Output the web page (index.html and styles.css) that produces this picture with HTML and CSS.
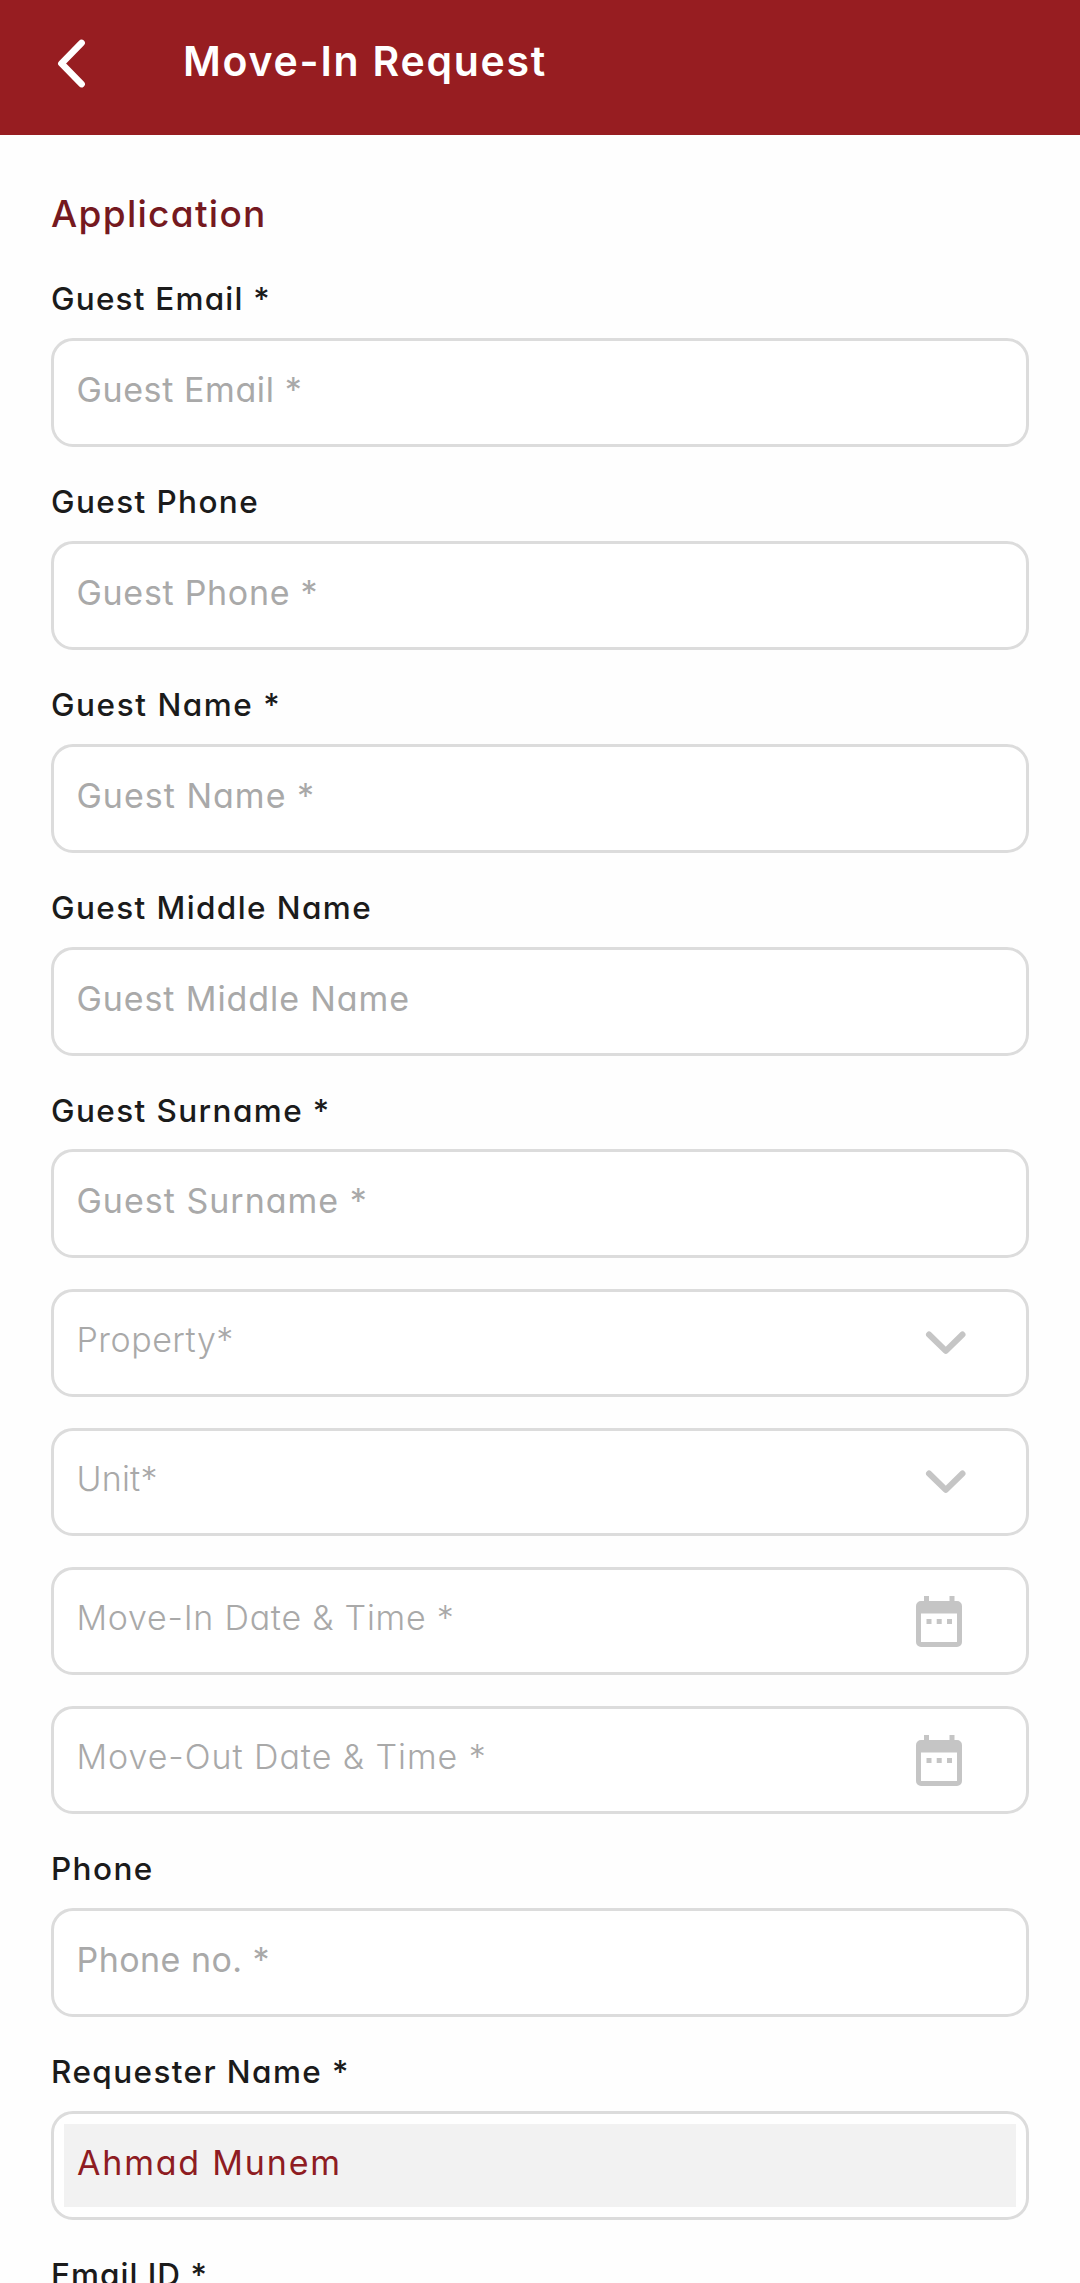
FILE: index.html
```html
<!DOCTYPE html>
<html lang="en">
<head>
<meta charset="utf-8">
<title>Move-In Request</title>
<link rel="stylesheet" href="styles.css">
</head>
<body>
<header class="topbar">
  <svg class="back" viewBox="0 0 36 56" width="36" height="56"><path d="M28.500 9 8.500 29.500 28.500 50"/></svg>
  <h1 class="title">Move-In Request</h1>
</header>
<main class="form">
  <h2 class="section">Application</h2>

  <div class="label snug">Guest Email *</div>
  <div class="box snug">Guest Email *</div>

  <div class="label">Guest Phone</div>
  <div class="box phone">Guest Phone *</div>

  <div class="label wide">Guest Name *</div>
  <div class="box wide">Guest Name *</div>

  <div class="label">Guest Middle Name</div>
  <div class="box">Guest Middle Name</div>

  <div class="label">Guest Surname *</div>
  <div class="box wide">Guest Surname *</div>

  <div class="pickers">
    <div class="box light tight">
      <span>Property*</span>
      <svg class="chevron" viewBox="0 0 46 30" width="46" height="30"><path d="M6 6.500 22.800 22.800 39.500 6.500"/></svg>
    </div>
    <div class="box light narrow">
      <span>Unit*</span>
      <svg class="chevron" viewBox="0 0 46 30" width="46" height="30"><path d="M6 6.500 22.800 22.800 39.500 6.500"/></svg>
    </div>
    <div class="box light">
      <span>Move-In Date &amp; Time *</span>
      <svg class="calendar" viewBox="0 0 46 51" width="46" height="51"><path fill-rule="evenodd" d="M8 0h5v5h20.500V0h5v5H41a5 5 0 0 1 5 5v36a5 5 0 0 1-5 5H5a5 5 0 0 1-5-5V10a5 5 0 0 1 5-5h3zM5 17.500V46h36V17.500zM10.500 23h5v5h-5zM20.700 23h5v5h-5zM31 23h5v5h-5z"/></svg>
    </div>
    <div class="box light out">
      <span>Move-Out Date &amp; Time *</span>
      <svg class="calendar" viewBox="0 0 46 51" width="46" height="51"><path fill-rule="evenodd" d="M8 0h5v5h20.500V0h5v5H41a5 5 0 0 1 5 5v36a5 5 0 0 1-5 5H5a5 5 0 0 1-5-5V10a5 5 0 0 1 5-5h3zM5 17.500V46h36V17.500zM10.500 23h5v5h-5zM20.700 23h5v5h-5zM31 23h5v5h-5z"/></svg>
    </div>
  </div>

  <div class="label">Phone</div>
  <div class="box tight">Phone no. *</div>

  <div class="label">Requester Name *</div>
  <div class="box readonly"><div class="value">Ahmad Munem</div></div>

  <div class="label id">Email ID *</div>
</main>
</body>
</html>
```
FILE: styles.css
```css
* {
  box-sizing: border-box;
}

body {
  margin: 0;
  height: 2283px;
  overflow: hidden;
  background: #fefefe;
  font-family: Inter, "Open Sans", sans-serif;
  font-feature-settings: "cv11";
}

/* Header */
.topbar {
  display: flex;
  align-items: flex-start;
  height: 135px;
  padding-left: 53px;
  background: #971d21;
  color: #fff;
}

.back {
  margin-top: 34px;
  fill: none;
  stroke: #fff;
  stroke-width: 6.8;
  stroke-linecap: round;
  stroke-linejoin: round;
}

.title {
  margin: 31px 0 0 94px;
  font-size: 41px;
  font-weight: 600;
  line-height: 60px;
  letter-spacing: 1.75px;
}

/* Form */
.form {
  padding: 0 51px;
}

.section {
  margin: 0;
  height: 109.5px;
  padding-top: 57px;
  color: #75191f;
  font-size: 37px;
  font-weight: 500;
  line-height: 44px;
  letter-spacing: 1.3px;
}

.label {
  height: 93.75px;
  padding-top: 31px;
  color: #1b1b1b;
  font-size: 31.5px;
  font-weight: 500;
  line-height: 47px;
  letter-spacing: 1.4px;
}

.label.snug {
  padding-top: 30px;
  letter-spacing: 1.2px;
}

.label.wide {
  letter-spacing: 1.55px;
}

.label.id {
  letter-spacing: 1px;
}

.box {
  height: 109px;
  padding-left: 22.5px;
  border: 3px solid #dcdcdc;
  border-radius: 22px;
  background: #fff;
  color: #a9a9a9;
  font-size: 34px;
  font-weight: 400;
  line-height: 97px;
  letter-spacing: .9px;
}

.box.snug {
  letter-spacing: .6px;
}

.box.phone {
  letter-spacing: .7px;
}

.box.wide {
  letter-spacing: 1px;
}

.box.tight {
  letter-spacing: .45px;
}

/* Dropdown and date fields */
.pickers {
  display: grid;
  gap: 31px;
  padding: 30.75px 0 .25px;
}

.box.light {
  display: flex;
  align-items: flex-start;
  justify-content: space-between;
  height: 108px;
  font-weight: 300;
  line-height: 95px;
  letter-spacing: .75px;
}

.box.light.tight {
  letter-spacing: .5px;
}

.box.light.narrow {
  letter-spacing: .2px;
}

.box.light.out {
  letter-spacing: .95px;
}

.chevron {
  margin: 36px 57px 0 0;
  fill: none;
  stroke: #c5c5c5;
  stroke-width: 6;
  stroke-linecap: round;
  stroke-linejoin: round;
}

.calendar {
  margin: 26px 64px 0 0;
  fill: #c5c5c5;
}

/* Prefilled field */
.box.readonly {
  padding: 10px;
}

.value {
  height: 83px;
  padding-left: 13px;
  background: #f2f2f2;
  color: #8e1c22;
  line-height: 77px;
  letter-spacing: 1.8px;
}
```
